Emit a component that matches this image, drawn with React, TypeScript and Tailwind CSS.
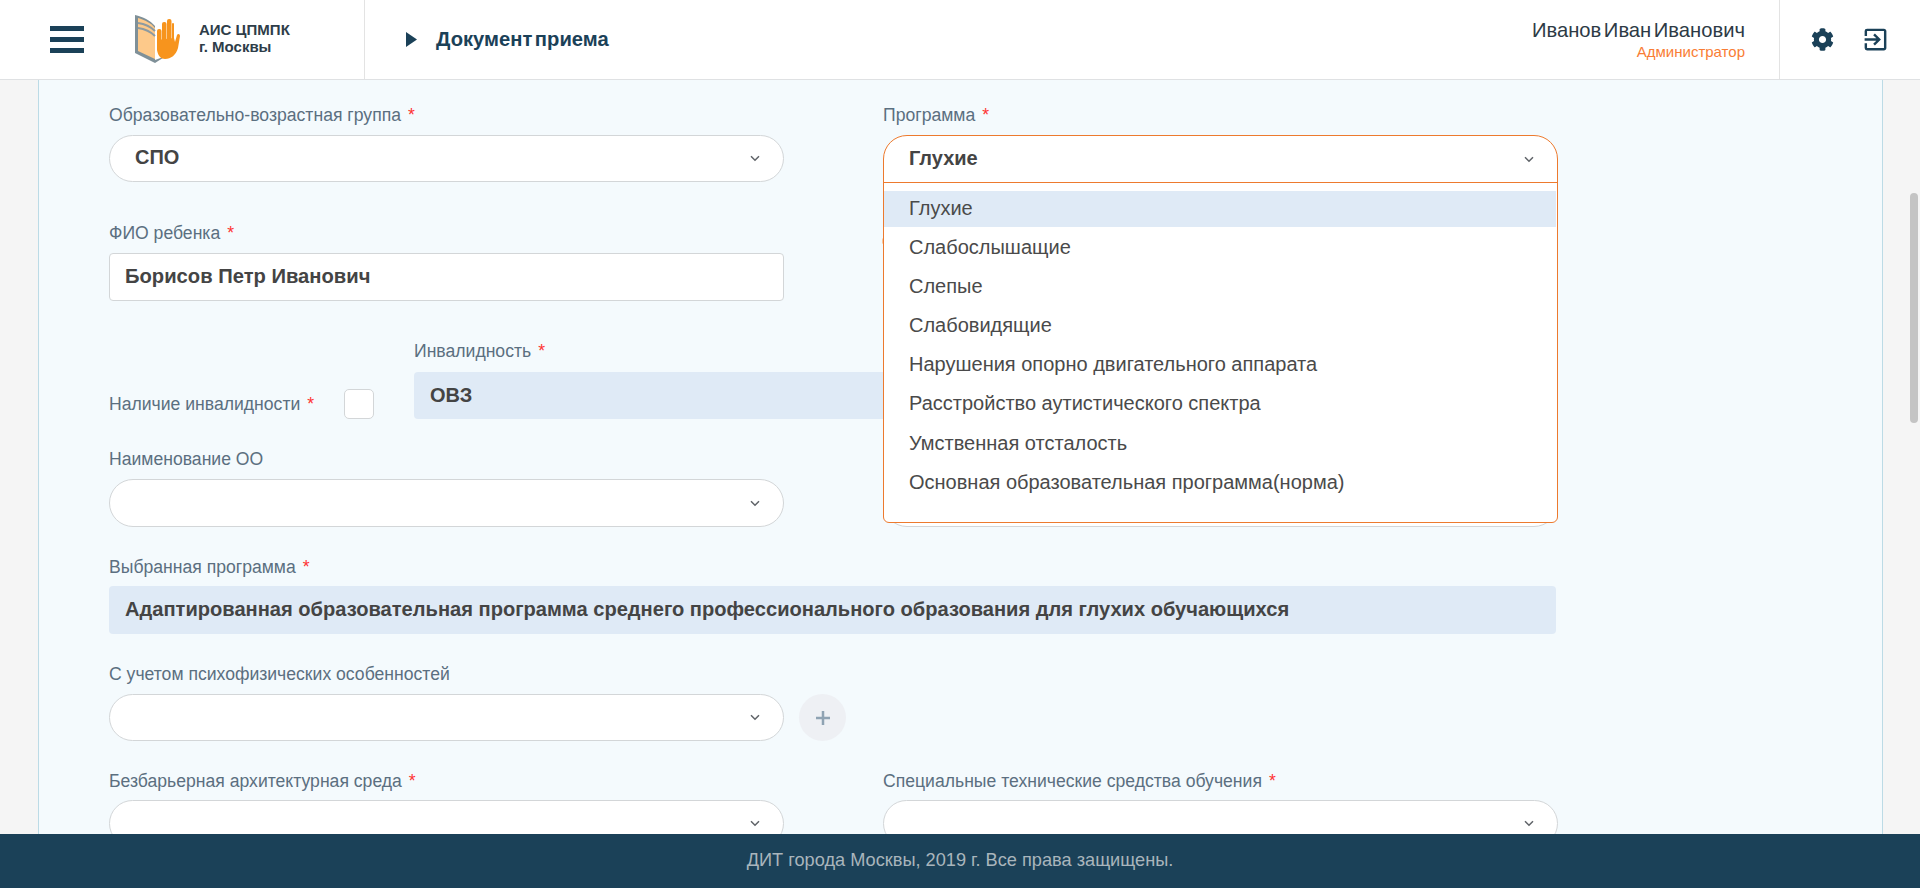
import { FaCog } from "react-icons/fa";
import { MdExitToApp } from "react-icons/md";

const FONT = "font-['Liberation_Sans',Arial,sans-serif]";

function Chevron() {
  return (
    <svg width="10" height="7" viewBox="0 0 10 7" className="shrink-0" fill="none">
      <path d="M1 1.2 L5 5.2 L9 1.2" stroke="#5f6368" strokeWidth="1.5" />
    </svg>
  );
}

function Label({ text, req }: { text: string; req?: boolean }) {
  return (
    <div className="h-5 text-[17.6px] leading-5 text-[#5b6f80] whitespace-nowrap">
      {text}
      {req && <span className="text-[#f33] ml-[7px]">*</span>}
    </div>
  );
}

function SelectBox({ value, className = "", tall }: { value?: string; className?: string; tall?: boolean }) {
  return (
    <div
      className={`${tall ? "h-[48px]" : "h-[47px]"} rounded-[24px] border border-[#d3d6d8] bg-white flex items-center justify-between pl-[25px] pr-[23px] ${className}`}
    >
      <span className="text-[20px] font-bold text-[#444] pb-[3px]">{value}</span>
      <Chevron />
    </div>
  );
}

function Logo() {
  return (
    <svg width="60" height="60" viewBox="0 0 60 60" className="shrink-0">
      <path d="M5 5 C13 7 20 10 25 16 L25 50 L36 46 L25 53 L5 43 Z" fill="#7f9098" />
      <path d="M8 8 C15 10 21 13 25 18 L25 49 L8 41 Z" fill="#fdc98a" />
      <path d="M8 13 C15 14 21 17 25 21 M8 18 C15 19 21 22 25 26" stroke="#8d9aa0" strokeWidth="2" fill="none" />
      <rect x="27" y="19" width="4.5" height="16" rx="2" fill="#f7941d" />
      <rect x="32" y="12" width="4.5" height="22" rx="2" fill="#f7941d" />
      <rect x="37" y="9" width="4.5" height="24" rx="2" fill="#f7941d" />
      <rect x="42" y="13" width="2" height="20" rx="1" fill="#f7941d" />
      <path d="M27 30 L44 28 L45 32 L47 25 C48 23 50 24 50 26 L48 38 C46 45 41 49 35 49 C31 49 28 46 27 40 Z" fill="#f7941d" />
    </svg>
  );
}

const options = [
  "Глухие",
  "Слабослышащие",
  "Слепые",
  "Слабовидящие",
  "Нарушения опорно двигательного аппарата",
  "Расстройство аутистического спектра",
  "Умственная отсталость",
  "Основная образовательная программа(норма)",
];

export default function App() {
  return (
    <div className={`h-[888px] w-[1920px] overflow-hidden flex flex-col bg-[#f5f5f5] ${FONT}`}>
      <header className="h-[80px] shrink-0 bg-white border-b border-[#dfe1e3] flex items-stretch">
        <div className="w-[365px] shrink-0 border-r border-[#e3e3e3] flex items-center pl-[50px]">
          <div className="w-[34px] flex flex-col gap-[6px]">
            <div className="h-[5px] bg-[#1b4158]" />
            <div className="h-[5px] bg-[#1b4158]" />
            <div className="h-[5px] bg-[#1b4158]" />
          </div>
          <div className="ml-[46px]"><Logo /></div>
          <div className="ml-[9px] mb-[4px] text-[15px] leading-[17px] font-bold text-[#2e3d49] whitespace-nowrap">
            <div>АИС ЦПМПК</div>
            <div>г. Москвы</div>
          </div>
        </div>
        <div className="flex-1 flex items-center pl-[41px]">
          <svg width="11" height="15" viewBox="0 0 11 15"><path d="M0 0 L11 7.5 L0 15 Z" fill="#1b4158" /></svg>
          <span className="ml-[19px] mb-[1px] text-[20.2px] font-bold text-[#1b4158] [word-spacing:-3px]">Документ приема</span>
        </div>
        <div className="flex flex-col items-end justify-center pr-[34px]">
          <div className="text-[20.2px] leading-[24px] text-[#2d3a45] [word-spacing:-3px]">Иванов Иван Иванович</div>
          <div className="text-[15px] leading-[19px] text-[#f97d35]">Администратор</div>
        </div>
        <div className="w-[141px] shrink-0 border-l border-[#e3e3e3] flex items-center pl-[31px] gap-[27px]">
          <FaCog size={23} color="#1b4158" />
          <MdExitToApp size={29} color="#1b4158" />
        </div>
      </header>

      <div className="flex-1 min-h-0 flex relative">
        <main className="ml-[38px] w-[1845px] border-x border-[#bcdbe6] bg-[#f4fafd] overflow-hidden pl-[70px] pt-[25px]">
          <div className="w-[1449px] flex flex-col">
            <div className="grid grid-cols-[675px_675px] gap-x-[99px]">
              <div>
                <Label text="Образовательно-возрастная группа" req />
                <SelectBox value="СПО" className="mt-[10px]" />
              </div>
              <div className="relative">
                <Label text="Программа" req />
                <div className="absolute left-[-1px] top-[133px] w-[3px] h-[6px] rounded-[2px] bg-[#f6c6a0]" />
                <div className="absolute left-0 right-0 top-[30px] z-10 bg-white border border-[#ed7a2e] rounded-t-[24px] rounded-b-[6px]">
                  <div className="h-[47px] flex items-center justify-between pl-[25px] pr-[23px] border-b border-[#ed7a2e]">
                    <span className="text-[20px] font-bold text-[#444] pb-[3px]">Глухие</span>
                    <Chevron />
                  </div>
                  <div className="pt-[8px] h-[339px]">
                    {options.map((o, i) => (
                      <div
                        key={o}
                        className={`h-[36px] mb-[3.2px] mr-[1px] flex items-center pl-[25px] pb-[3px] text-[20px] text-[#4a4a4a] whitespace-nowrap ${i === 0 ? "bg-[#dfeaf6]" : ""}`}
                      >
                        {o}
                      </div>
                    ))}
                  </div>
                </div>
              </div>
            </div>

            <div className="mt-[41px]">
              <Label text="ФИО ребенка" req />
              <div className="mt-[10px] w-[675px] h-[48px] rounded-[4px] border border-[#d3d6d8] bg-white flex items-center pl-[15px] pb-[1px] text-[20.2px] font-bold text-[#444]">
                Борисов Петр Иванович
              </div>
            </div>

            <div className="mt-[40px] flex items-end">
              <div className="w-[265px] shrink-0 flex items-center h-[30px]">
                <Label text="Наличие инвалидности" req />
                <div className="ml-auto w-[30px] h-[30px] rounded-[5px] border border-[#d3d6d8] bg-white" />
              </div>
              <div className="ml-[40px] flex-1">
                <Label text="Инвалидность" req />
                <div className="mt-[11px] h-[47px] rounded-[4px] bg-[#dfeaf6] flex items-center pl-[16px] pb-[2px] text-[20px] font-bold text-[#444]">
                  ОВЗ
                </div>
              </div>
            </div>

            <div className="mt-[30px] grid grid-cols-[675px_675px] gap-x-[99px]">
              <div>
                <Label text="Наименование ОО" />
                <SelectBox tall className="mt-[10px]" />
              </div>
              <div className="pt-[30px]">
                <SelectBox tall />
              </div>
            </div>

            <div className="mt-[30px]">
              <Label text="Выбранная программа" req />
              <div className="mt-[9px] w-[1447px] h-[48px] rounded-[4px] bg-[#dfeaf6] flex items-center pl-[16px] pb-[1px] text-[20.1px] font-bold text-[#444] whitespace-nowrap">
                Адаптированная образовательная программа среднего профессионального образования для глухих обучающихся
              </div>
            </div>

            <div className="mt-[30px]">
              <Label text="С учетом психофизических особенностей" />
              <div className="mt-[10px] flex items-center gap-[15px]">
                <SelectBox className="w-[675px]" />
                <div className="w-[47px] h-[47px] rounded-full bg-[#eef0f4] flex items-center justify-center">
                  <svg width="14" height="14" viewBox="0 0 14 14"><path d="M7 0 V14 M0 7 H14" stroke="#8fa3b3" strokeWidth="2.5" /></svg>
                </div>
              </div>
            </div>

            <div className="mt-[30px] grid grid-cols-[675px_675px] gap-x-[99px]">
              <div>
                <Label text="Безбарьерная архитектурная среда" req />
                <SelectBox className="mt-[9px]" />
              </div>
              <div>
                <Label text="Специальные технические средства обучения" req />
                <SelectBox className="mt-[9px]" />
              </div>
            </div>
          </div>
        </main>
        <div className="flex-1 relative">
          <div className="ml-[27px] mt-[113px] w-[8px] h-[230px] rounded-[4px] bg-[#c4c4c4]" />
        </div>
      </div>

      <footer className="h-[54px] shrink-0 bg-[#1b4158] flex items-center justify-center pb-[1px] text-[18.2px] text-[#a9b5bc] relative z-20">
        ДИТ города Москвы, 2019 г. Все права защищены.
      </footer>
    </div>
  );
}
